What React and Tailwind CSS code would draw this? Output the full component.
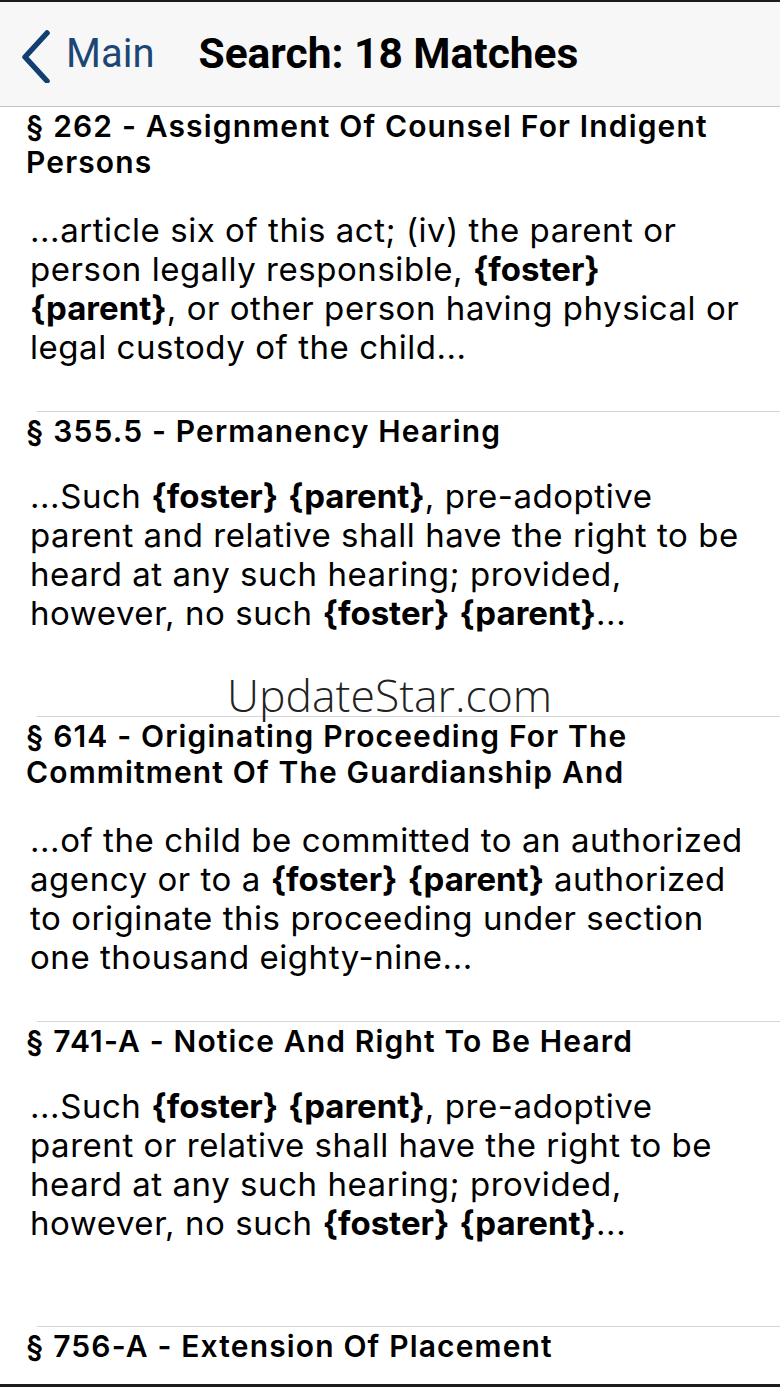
import React from "react";

const B = ({ children }) => <span className="font-bold tracking-normal">{children}</span>;

function Row({ title, body, twoLine = false, last = false }) {
  return (
    <div className="flex flex-col">
      <div className="h-[304px] overflow-hidden pt-[1px]">
        <div
          className={`pl-[26px] pr-[10px] text-[30px] leading-[36px] font-semibold text-black tracking-[1.15px] overflow-hidden whitespace-nowrap ${twoLine ? "h-[75px]" : "h-[36px]"}`}
        >
          {title}
        </div>
        {body && (
          <div className="pl-[30px] mt-[28px] text-[33px] leading-[39px] text-black tracking-[0.55px] whitespace-nowrap">
            {body}
          </div>
        )}
      </div>
      {!last && <div className="ml-[37px] h-px bg-[#d6d6d6]" />}
    </div>
  );
}

export default function App() {
  return (
    <div
      className="relative w-[780px] h-[1387px] overflow-hidden bg-white border-t-2 border-b-[3px] border-[#1c1c1c] flex flex-col"
      style={{ fontFamily: "Inter, 'Noto Sans', sans-serif" }}
    >
      <div
        className="h-[105px] shrink-0 bg-[#f7f7f7] border-b border-[#c4c4c4] flex items-center"
        style={{ fontFamily: "Roboto, 'Liberation Sans', sans-serif" }}
      >
        <svg width="40" height="56" viewBox="0 0 40 56" className="ml-[15px] mt-[2px]">
          <path d="M32 6 L10 30 L32 54" fill="none" stroke="#123f6f" strokeWidth="5.5" strokeLinecap="round" strokeLinejoin="round" />
        </svg>
        <span className="ml-[11px] text-[40px] text-[#1b4775]">Main</span>
        <span className="ml-[44px] text-[42.5px] font-bold text-black">Search: 18 Matches</span>
      </div>

      <Row
        twoLine
        title={<>§ 262 - Assignment Of Counsel For Indigent<br />Persons</>}
        body={<>
          ...article six of this act; (iv) the parent or<br />
          person legally responsible, <B>{"{foster}"}</B><br />
          <B>{"{parent}"}</B>, or other person having physical or<br />
          legal custody of the child...
        </>}
      />
      <Row
        title={<>§ 355.5 - Permanency Hearing</>}
        body={<>
          ...Such <B>{"{foster}"}</B> <B>{"{parent}"}</B>, pre-adoptive<br />
          parent and relative shall have the right to be<br />
          heard at any such hearing; provided,<br />
          however, no such <B>{"{foster}"}</B> <B>{"{parent}"}</B>...
        </>}
      />
      <Row
        twoLine
        title={<>§ 614 - Originating Proceeding For The<br />Commitment Of The Guardianship And<br />Custody Of A Destitute Or Dependent Child</>}
        body={<>
          ...of the child be committed to an authorized<br />
          agency or to a <B>{"{foster}"}</B> <B>{"{parent}"}</B> authorized<br />
          to originate this proceeding under section<br />
          one thousand eighty-nine...
        </>}
      />
      <Row
        title={<>§ 741-A - Notice And Right To Be Heard</>}
        body={<>
          ...Such <B>{"{foster}"}</B> <B>{"{parent}"}</B>, pre-adoptive<br />
          parent or relative shall have the right to be<br />
          heard at any such hearing; provided,<br />
          however, no such <B>{"{foster}"}</B> <B>{"{parent}"}</B>...
        </>}
      />
      <Row title={<>§ 756-A - Extension Of Placement</>} body={null} last />

      <div
        className="absolute left-[227px] top-[671px] text-[44.5px] font-light text-[#222] leading-none pointer-events-none"
        style={{ fontFamily: "'Open Sans', sans-serif" }}
      >
        UpdateStar.com
      </div>
    </div>
  );
}
